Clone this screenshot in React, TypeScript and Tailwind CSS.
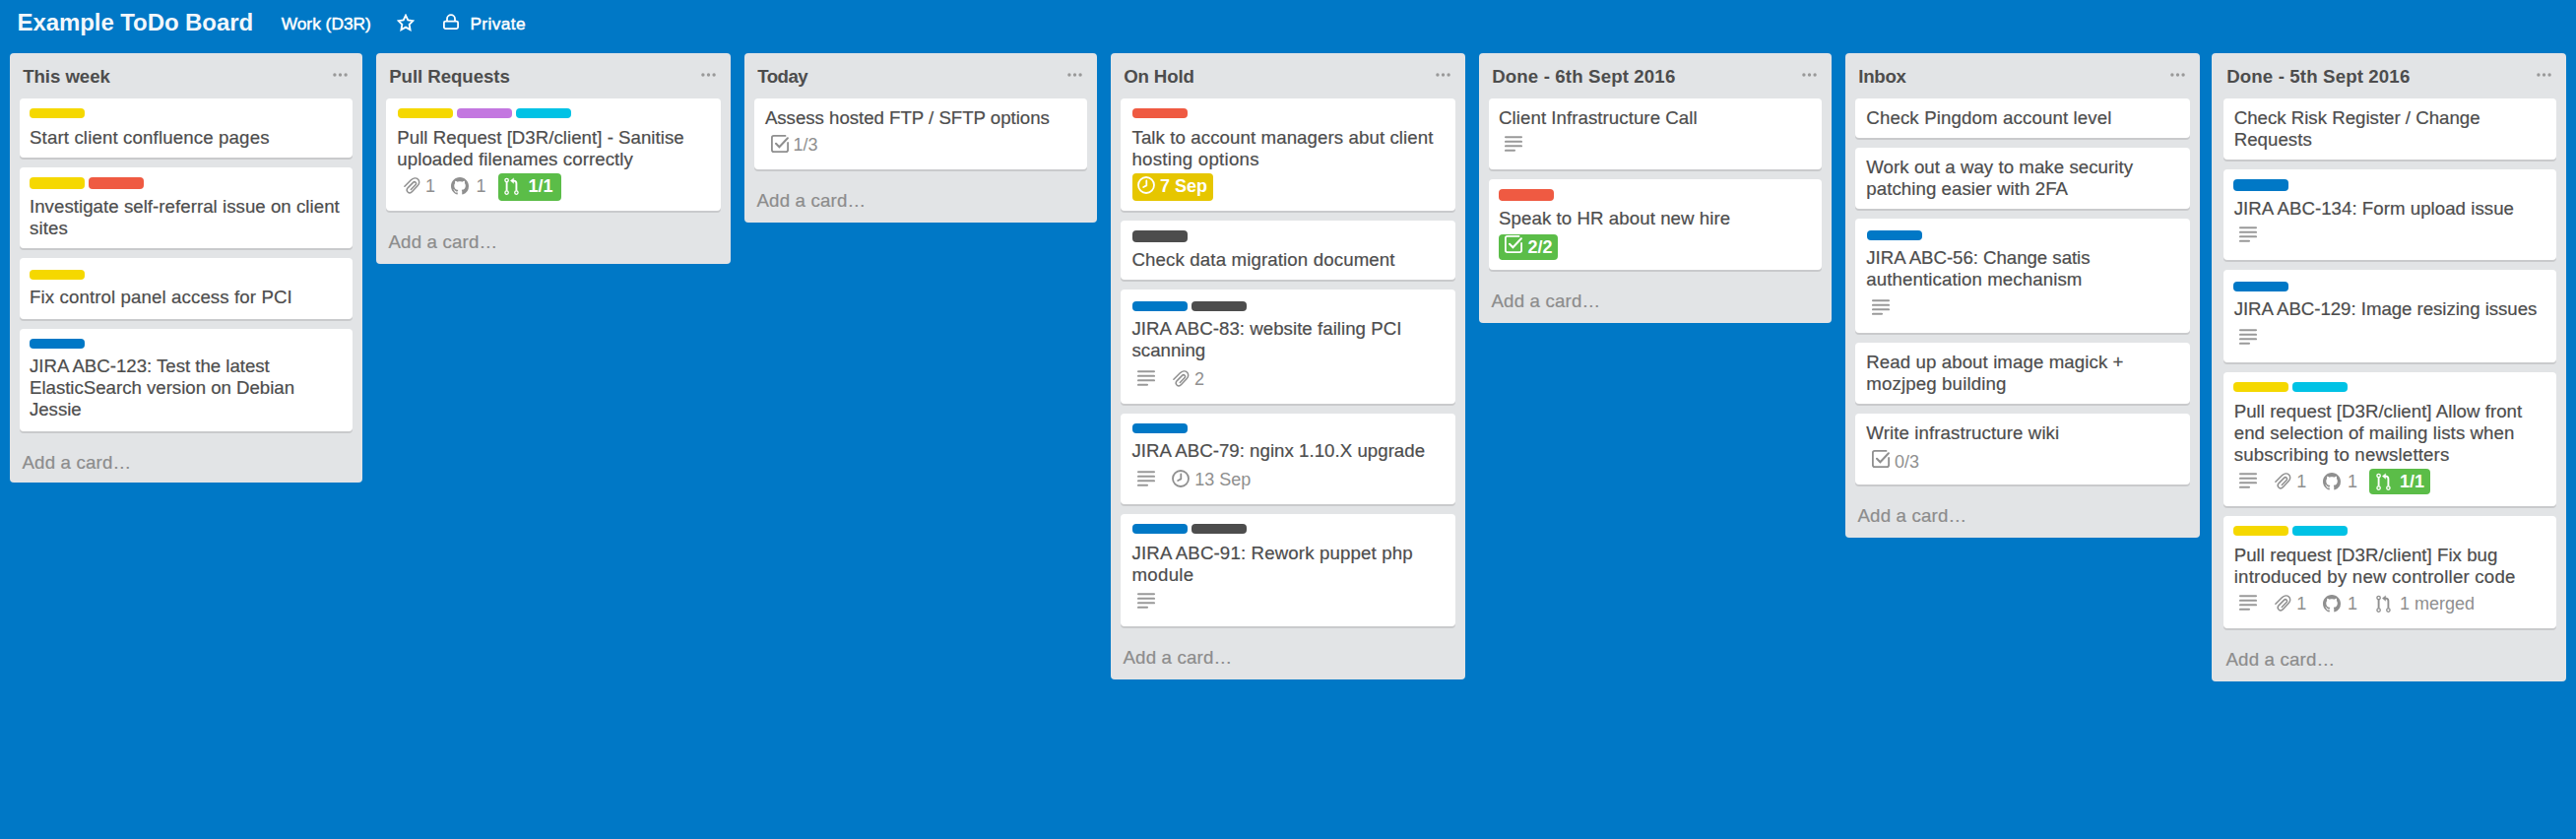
import type { ReactNode } from "react";

type Badge =
  | { kind: "desc" }
  | { kind: "clip" | "github" | "check" | "clock" | "pr"; text: string; box?: string };

type Card = {
  size: string;
  labelSize?: string;
  labels?: string[];
  lines: [string, string][];
  badges?: Badge[];
  badgeTop?: string;
};

type Column = {
  title: string;
  titleTracking: string;
  box: string;
  footer?: string;
  textPad: string;
  labelPad: string;
  cards: Card[];
};

const YELLOW = "bg-[#f5d800]";
const RED = "bg-[#ef5a42]";
const BLUE = "bg-[#0078c6]";
const BLACK = "bg-[#4d4d4d]";
const PURPLE = "bg-[#c377e0]";
const SKY = "bg-[#00c2e5]";
const GREEN_BOX = "rounded-[4px] bg-[#5bbd48] font-bold text-white";

const LABEL_10 = "mt-[10px] mb-[9px] h-[10px]";
const LABEL_12 = "mt-[10px] mb-[7px] h-[12px]";
const LABEL_10_TIGHT = "mt-[10px] mb-[7px] h-[10px]";
const LABEL_10_LOW = "mt-[12px] mb-[7px] h-[10px]";

const columns: Column[] = [
  {
    title: "This week",
    titleTracking: "tracking-[-0.06px]",
    box: "ml-[10px] w-[358px] px-[10px]",
    footer: "h-[52px]",
    textPad: "pl-[9.3px]",
    labelPad: "pl-[10px]",
    cards: [
      { size: "h-[60px]", labelSize: LABEL_10, labels: [YELLOW], lines: [["Start client confluence pages", "tracking-[0.14px]"]] },
      {
        size: "h-[82px]",
        labelSize: LABEL_12,
        labels: [YELLOW, RED],
        lines: [
          ["Investigate self-referral issue on client", "tracking-[0.04px]"],
          ["sites", "tracking-[0.13px]"],
        ],
      },
      { size: "h-[62px]", labelSize: LABEL_10_LOW, labels: [YELLOW], lines: [["Fix control panel access for PCI", "tracking-[0.11px]"]] },
      {
        size: "h-[104px]",
        labelSize: LABEL_10_TIGHT,
        labels: [BLUE],
        lines: [
          ["JIRA ABC-123: Test the latest", "tracking-[-0.021px]"],
          ["ElasticSearch version on Debian", "tracking-[-0.018px]"],
          ["Jessie", "tracking-[-0.041px]"],
        ],
      },
    ],
  },
  {
    title: "Pull Requests",
    titleTracking: "tracking-[-0.06px]",
    box: "ml-[14px] w-[360px] px-[10px]",
    textPad: "pl-[10.6px]",
    labelPad: "pl-[12px]",
    cards: [
      {
        size: "h-[114px]",
        labelSize: LABEL_10,
        labels: [YELLOW, PURPLE, SKY],
        lines: [
          ["Pull Request [D3R/client] - Sanitise", "tracking-[0.03px]"],
          ["uploaded filenames correctly", "tracking-[0.08px]"],
        ],
        badgeTop: "mt-[3px]",
        badges: [
          { kind: "clip", text: "1" },
          { kind: "github", text: "1" },
          { kind: "pr", text: "1/1", box: `h-[28px] w-[64px] ${GREEN_BOX}` },
        ],
      },
    ],
  },
  {
    title: "Today",
    titleTracking: "tracking-[-0.5px]",
    box: "ml-[14px] w-[358px] px-[10px]",
    textPad: "pl-[10.2px]",
    labelPad: "pl-[10px]",
    cards: [
      {
        size: "h-[72px]",
        lines: [["Assess hosted FTP / SFTP options", "tracking-[-0.022px]"]],
        badgeTop: "mt-[3px]",
        badges: [{ kind: "check", text: "1/3", box: "[&>svg]:mt-[3px]" }],
      },
    ],
  },
  {
    title: "On Hold",
    titleTracking: "tracking-[-0.14px]",
    box: "ml-[14px] w-[360px] px-[10px]",
    textPad: "pl-[10.8px]",
    labelPad: "pl-[12px]",
    cards: [
      {
        size: "h-[114px]",
        labelSize: LABEL_10,
        labels: [RED],
        lines: [
          ["Talk to account managers abut client", "tracking-[0.09px]"],
          ["hosting options", "tracking-[0.25px]"],
        ],
        badgeTop: "mt-[3px]",
        badges: [{ kind: "clock", text: "7 Sep", box: "ml-[1.2px] h-[28px] w-[82px] rounded-[4px] bg-[#e6c600] pl-[5px]! font-bold text-white" }],
      },
      { size: "h-[60px]", labelSize: LABEL_12, labels: [BLACK], lines: [["Check data migration document", "tracking-[0.13px]"]] },
      {
        size: "h-[116px]",
        labelSize: LABEL_10_LOW,
        labels: [BLUE, BLACK],
        lines: [
          ["JIRA ABC-83: website failing PCI", "tracking-[0.04px]"],
          ["scanning", "tracking-[0px]"],
        ],
        badgeTop: "mt-[5px]",
        badges: [{ kind: "desc" }, { kind: "clip", text: "2" }],
      },
      {
        size: "h-[92px]",
        labelSize: LABEL_10_TIGHT,
        labels: [BLUE],
        lines: [["JIRA ABC-79: nginx 1.10.X upgrade", "tracking-[0.03px]"]],
        badgeTop: "mt-[5px]",
        badges: [{ kind: "desc" }, { kind: "clock", text: "13 Sep" }],
      },
      {
        size: "h-[114px]",
        labelSize: LABEL_10,
        labels: [BLUE, BLACK],
        lines: [
          ["JIRA ABC-91: Rework puppet php", "tracking-[0.14px]"],
          ["module", "tracking-[0.297px]"],
        ],
        badgeTop: "mt-[3px]",
        badges: [{ kind: "desc" }],
      },
    ],
  },
  {
    title: "Done - 6th Sept 2016",
    titleTracking: "tracking-[0.135px]",
    box: "ml-[14px] w-[358px] px-[10px]",
    textPad: "pl-[9.4px]",
    labelPad: "pl-[10px]",
    cards: [
      {
        size: "h-[72px]",
        lines: [["Client Infrastructure Call", "tracking-[0.057px]"]],
        badgeTop: "mt-[3px]",
        badges: [{ kind: "desc" }],
      },
      {
        size: "h-[92px]",
        labelSize: LABEL_12,
        labels: [RED],
        lines: [["Speak to HR about new hire", "tracking-[0.069px]"]],
        badgeTop: "mt-[5px]",
        badges: [{ kind: "check", text: "2/2", box: `ml-[0.6px] h-[26px] w-[60px] [&>svg]:mt-[1px] ${GREEN_BOX}` }],
      },
    ],
  },
  {
    title: "Inbox",
    titleTracking: "tracking-[-0.243px]",
    box: "ml-[14px] w-[360px] px-[10px]",
    textPad: "pl-[10.6px]",
    labelPad: "pl-[12px]",
    cards: [
      { size: "h-[40px]", lines: [["Check Pingdom account level", "tracking-[0.13px]"]] },
      {
        size: "h-[62px]",
        lines: [
          ["Work out a way to make security", "tracking-[0.05px]"],
          ["patching easier with 2FA", "tracking-[0.065px]"],
        ],
      },
      {
        size: "h-[116px]",
        labelSize: LABEL_10_LOW,
        labels: [BLUE],
        lines: [
          ["JIRA ABC-56: Change satis", "tracking-[-0.036px]"],
          ["authentication mechanism", "tracking-[0.104px]"],
        ],
        badgeTop: "mt-[5px]",
        badges: [{ kind: "desc" }],
      },
      {
        size: "h-[62px]",
        lines: [
          ["Read up about image magick +", "tracking-[0.09px]"],
          ["mozjpeg building", "tracking-[0.14px]"],
        ],
      },
      {
        size: "h-[72px]",
        lines: [["Write infrastructure wiki", "tracking-[0.1px]"]],
        badgeTop: "mt-[5px]",
        badges: [{ kind: "check", text: "0/3", box: "[&>svg]:mt-[1px]" }],
      },
    ],
  },
  {
    title: "Done - 5th Sept 2016",
    titleTracking: "tracking-[0.135px]",
    box: "ml-[12px] w-[360px] pl-[12px] pr-[10px]",
    textPad: "pl-[10px]",
    labelPad: "pl-[10px]",
    cards: [
      {
        size: "h-[62px]",
        lines: [
          ["Check Risk Register / Change", "tracking-[0px]"],
          ["Requests", "tracking-[0.03px]"],
        ],
      },
      {
        size: "h-[92px]",
        labelSize: LABEL_12,
        labels: [BLUE],
        lines: [["JIRA ABC-134: Form upload issue", "tracking-[0.04px]"]],
        badgeTop: "mt-[3px]",
        badges: [{ kind: "desc" }],
      },
      {
        size: "h-[94px]",
        labelSize: LABEL_10_LOW,
        labels: [BLUE],
        lines: [["JIRA ABC-129: Image resizing issues", "tracking-[-0.04px]"]],
        badgeTop: "mt-[5px]",
        badges: [{ kind: "desc" }],
      },
      {
        size: "h-[136px]",
        labelSize: LABEL_10,
        labels: [YELLOW, SKY],
        lines: [
          ["Pull request [D3R/client] Allow front", "tracking-[0.03px]"],
          ["end selection of mailing lists when", "tracking-[0.077px]"],
          ["subscribing to newsletters", "tracking-[0.159px]"],
        ],
        badgeTop: "mt-[3px]",
        badges: [
          { kind: "desc" },
          { kind: "clip", text: "1" },
          { kind: "github", text: "1" },
          { kind: "pr", text: "1/1", box: `h-[26px] w-[62px] ${GREEN_BOX}` },
        ],
      },
      {
        size: "h-[114px]",
        labelSize: LABEL_10,
        labels: [YELLOW, SKY],
        lines: [
          ["Pull request [D3R/client] Fix bug", "tracking-[0.037px]"],
          ["introduced by new controller code", "tracking-[0.21px]"],
        ],
        badgeTop: "mt-[3px]",
        badges: [
          { kind: "desc" },
          { kind: "clip", text: "1" },
          { kind: "github", text: "1" },
          { kind: "pr", text: "1 merged" },
        ],
      },
    ],
  },
];

function DescIcon() {
  return (
    <svg className="mt-[4px] h-4 w-[18px] shrink-0" viewBox="0 0 18 16" fill="none" stroke="#999999" strokeWidth="2.1" strokeLinecap="round">
      <path d="M1 1.2h16M1 5.8h16M1 10.3h16M1 14.8h9" />
    </svg>
  );
}

function ClipIcon() {
  return (
    <svg className="mt-[4px] mr-[5px] h-[17px] w-[17px] shrink-0" viewBox="0 0 17 17" fill="none" stroke="currentColor" strokeWidth="1.5" strokeLinecap="round" strokeLinejoin="round">
      <path d="M.9 9.2 7.4 2.8C9.6.6 12.6.3 14.4 2c1.8 1.7 1.7 4.6-.2 6.6l-5.6 6c-1.3 1.4-3.3 1.5-4.5.4-1.2-1.2-1.1-3 .2-4.400l5.2-5.2c.8-.8 1.9-.9 2.6-.2.7.7.6 1.7-.2 2.5l-4.600 4.700" />
    </svg>
  );
}

function GithubIcon() {
  return (
    <svg className="mt-[4px] mr-[7.5px] h-[18px] w-[18px] shrink-0" viewBox="0 0 16 16" fill="currentColor">
      <path d="M8 0C3.58 0 0 3.58 0 8c0 3.54 2.29 6.53 5.47 7.59.4.07.55-.17.55-.38 0-.19-.01-.82-.01-1.49-2.01.37-2.53-.49-2.69-.94-.09-.23-.48-.94-.82-1.13-.28-.15-.68-.52-.01-.53.63-.01 1.08.58 1.23.82.72 1.21 1.87.87 2.33.66.07-.52.28-.87.51-1.07-1.78-.2-3.64-.89-3.64-3.95 0-.87.31-1.59.82-2.15-.08-.2-.36-1.02.08-2.12 0 0 .67-.21 2.2.82.64-.18 1.32-.27 2-.27s1.36.09 2 .27c1.53-1.04 2.2-.82 2.2-.82.44 1.1.16 1.92.08 2.12.51.56.82 1.27.82 2.15 0 3.07-1.87 3.75-3.65 3.95.29.25.54.73.54 1.48 0 1.07-.01 1.93-.01 2.2 0 .21.15.46.55.38A8.01 8.01 0 0 0 16 8c0-4.42-3.58-8-8-8z" />
    </svg>
  );
}

function CheckIcon() {
  return (
    <svg className="mr-[5px] h-[18px] w-[18px] shrink-0" viewBox="0 0 18 18" fill="none" stroke="currentColor" strokeLinecap="round">
      <path strokeWidth="1.8" d="M14.5.9H2.8A1.9 1.9 0 0 0 .9 2.8v12.400a1.9 1.9 0 0 0 1.9 1.9h12.400a1.9 1.9 0 0 0 1.9-1.9V8" />
      <path strokeWidth="2" d="m5 8.7 3.400 3.5 8.5-9" />
    </svg>
  );
}

function ClockIcon() {
  return (
    <svg className="mt-[3px] mr-[5px] h-[18px] w-[18px] shrink-0" viewBox="0 0 18 18" fill="none" stroke="currentColor" strokeLinecap="round" strokeLinejoin="round">
      <circle cx="9" cy="9" r="8" strokeWidth="1.8" />
      <path strokeWidth="1.8" d="M9.3 4.5v4.900L6.2 11" />
    </svg>
  );
}

function PullIcon() {
  return (
    <svg className="mt-[4px] mr-[9.5px] h-[18px] w-[15px] shrink-0" viewBox="0 0 15 18" fill="none" stroke="currentColor" strokeWidth="1.3">
      <circle cx="2.6" cy="3" r="1.7" />
      <circle cx="2.6" cy="15.6" r="1.7" />
      <circle cx="12.4" cy="15.6" r="1.7" />
      <path strokeWidth="1.9" d="M2.6 4.9v8.8M12.4 13.7V6.2c0-1.7-.9-2.6-2.4-2.6H8.8" />
      <path d="M9.7.9v5.4L6.3 3.6z" fill="currentColor" strokeWidth=".4" />
    </svg>
  );
}

const icons: Record<string, ReactNode> = {
  clip: <ClipIcon />,
  github: <GithubIcon />,
  check: <CheckIcon />,
  clock: <ClockIcon />,
  pr: <PullIcon />,
};

const slots: Record<string, string> = {
  clip: "w-[49px] pl-[7.3px]",
  github: "w-[54px] pl-[6.5px]",
  check: "pl-[6.4px]",
  clock: "pl-[6.4px]",
  pr: "pl-[6.5px]",
};

function BadgeItem({ badge }: { badge: Badge }) {
  if (badge.kind === "desc") {
    return (
      <div className="flex w-[35px] items-start pl-[6.3px]">
        <DescIcon />
      </div>
    );
  }
  return (
    <div className={`flex items-start whitespace-nowrap ${slots[badge.kind]} ${badge.box ?? ""}`}>
      {icons[badge.kind]}
      <span>{badge.text}</span>
    </div>
  );
}

function CardView({ card, column }: { card: Card; column: Column }) {
  return (
    <article className={`flex flex-col rounded-[4px] bg-white shadow-[0_2px_0_#c9cacc] ${card.size}`}>
      {card.labels ? (
        <div className={`flex shrink-0 gap-1 ${column.labelPad} ${card.labelSize}`}>
          {card.labels.map((color) => (
            <span key={color} className={`w-14 rounded-[4px] ${color}`} />
          ))}
        </div>
      ) : (
        <div className="h-[9px] shrink-0" />
      )}
      <div className={column.textPad}>
        {card.lines.map(([text, tracking]) => (
          <p key={text} className={`ml-[0.7px] text-[18.67px] leading-[22px] whitespace-nowrap [-webkit-text-stroke:0.2px] ${tracking}`}>
            {text}
          </p>
        ))}
        {card.badges && (
          <div className={`flex items-start text-[18px] leading-[26px] text-[#8f8f8f] ${card.badgeTop}`}>
            {card.badges.map((badge) => (
              <BadgeItem key={badge.kind} badge={badge} />
            ))}
          </div>
        )}
      </div>
    </article>
  );
}

function ColumnView({ column }: { column: Column }) {
  return (
    <section className={`shrink-0 rounded-[4px] bg-[#e2e4e6] ${column.box}`}>
      <header className="flex h-[46px] items-start justify-between pt-[13px] pr-[5px] pl-[3.2px]">
        <h2 className={`text-[18.67px] leading-[22px] font-bold ${column.titleTracking}`}>{column.title}</h2>
        <svg className="mt-[7px] h-1 w-[15px]" viewBox="0 0 15 4" fill="#999999">
          <circle cx="1.9" cy="2" r="1.7" />
          <circle cx="7.5" cy="2" r="1.7" />
          <circle cx="13.1" cy="2" r="1.7" />
        </svg>
      </header>
      <div className="flex flex-col gap-[10px]">
        {column.cards.map((card) => (
          <CardView key={card.lines[0][0]} card={card} column={column} />
        ))}
      </div>
      <div className={`pt-[21px] pl-[2.5px] text-[18.67px] leading-[22px] tracking-[0.177px] text-[#8c8c8c] [-webkit-text-stroke:0.2px] ${column.footer ?? "h-[54px]"}`}>
        Add a card…
      </div>
    </section>
  );
}

export default function App() {
  return (
    <main className="h-[852px] w-[2616px] overflow-hidden bg-[#0078c6] font-['Liberation_Sans',Arial,sans-serif] text-[#4d4d4d]">
      <header className="flex h-[54px] items-start pl-[17.5px] text-[17.33px] leading-5 whitespace-nowrap text-white">
        <h1 className="mt-[9px] w-[268.2px] text-[24px] leading-7 font-bold tracking-[-0.08px] text-[#f2f7fb]">Example ToDo Board</h1>
        <span className="mt-[14px] w-[117.5px] [-webkit-text-stroke:0.45px]">Work (D3R)</span>
        <svg className="mt-[13.5px] h-[18px] w-[18px]" viewBox="1 1 22 22" fill="none" stroke="currentColor" strokeWidth="2.3">
          <path d="m12 3 2.78 5.9 6.22.8-4.5 4.5 1.06 6.5L12 17.6l-5.56 3.1L7.5 14.2 3 9.7l6.22-.8z" />
        </svg>
        <svg className="mt-[14px] ml-[29px] h-4 w-4" viewBox="0 0 16 16" fill="none" stroke="currentColor" strokeWidth="1.8">
          <rect x=".9" y="7.6" width="14.2" height="7.5" rx="1.5" />
          <path d="M4 7.6V5.2a4 4 0 0 1 8 0v2.400" />
        </svg>
        <span className="mt-[14px] ml-[11.2px] tracking-[0.4px] [-webkit-text-stroke:0.45px]">Private</span>
      </header>
      <div className="flex items-start">
        {columns.map((column) => (
          <ColumnView key={column.title} column={column} />
        ))}
      </div>
    </main>
  );
}
